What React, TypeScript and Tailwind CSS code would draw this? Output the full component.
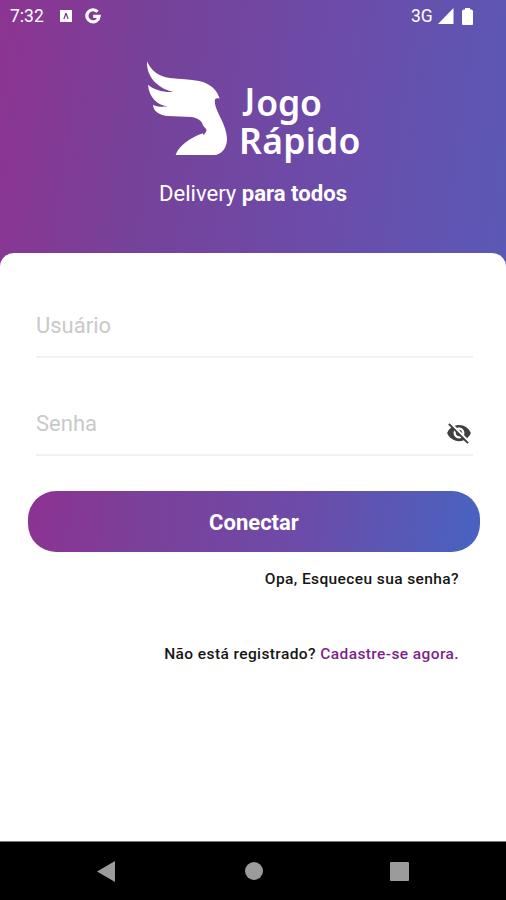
import React from "react";
import { MdVisibilityOff } from "react-icons/md";

function StatusBar() {
  return (
    <div className="flex h-8 items-center justify-between pl-[10px] pr-[33px] text-white">
      <div className="flex items-center">
        <span className="w-[50px] text-[17.5px] leading-8">7:32</span>
        <svg className="h-3 w-3" viewBox="0 0 12 12">
          <path fillRule="evenodd" fill="currentColor" d="M0 0H12V12H0ZM5.3 3L3.3 9H4.6L6 5L7.4 9H8.7L6.7 3Z" />
        </svg>
        <svg className="ml-[13px] h-4 w-4" viewBox="0 0 16 16" fill="none" stroke="currentColor" strokeWidth="3.2">
          <path d="M12.6 3.8A6.1 6.1 0 1 0 14.1 8.4H8.2" />
        </svg>
      </div>
      <div className="flex items-center">
        <span className="w-[27px] text-[17.5px] leading-8 tracking-[-0.1px]">3G</span>
        <svg className="h-4 w-4" viewBox="0 0 16 16" fill="currentColor">
          <path d="M15.5 0V16H0Z" />
        </svg>
        <svg className="ml-2 h-[17px] w-[11px]" viewBox="0 0 11 17" fill="currentColor">
          <path d="M3 0H8V1.5H9.5Q11 2 11 3V16Q11 17 10 17H1Q0 17 0 16V3Q0 2 1.5 1.5H3Z" />
        </svg>
      </div>
    </div>
  );
}

function Brand() {
  return (
    <div className="flex h-[133px] pl-[135px] pt-[18px] text-white">
      <svg className="h-[115px] w-[105px] shrink-0" viewBox="0 0 315 345" fill="currentColor">
        <path d="M36 34C48 62 70 80 105 84C135 88 165 88 192 93C225 100 245 118 254 146C248 144 243 145 240 148C238 160 242 172 250 190C262 215 276 240 276 270C274 298 258 314 238 315H122C130 290 165 262 204 250L206 256L214 244C216 235 206 232 204 226C200 212 190 205 170 201L100 198C75 196 55 185 54 164C64 170 80 172 98 169C70 166 42 145 39 104C55 118 85 128 115 126C75 118 33 85 36 34Z" />
      </svg>
      <div className="pt-[33px] font-['Noto_Sans',sans-serif] text-[35.5px] font-semibold leading-[38px]">
        <div className="h-[38px]">
          <span className="relative -top-[6px] ml-[5px] mr-[1.5px] text-[29.5px] font-bold leading-none">J</span>
          <span className="tracking-[-0.2px]">ogo</span>
        </div>
        <div className="-ml-[1px] h-[38px] tracking-[0.3px]">Rápido</div>
      </div>
    </div>
  );
}

function Field({ label, icon }: { label: string; icon?: React.ReactNode }) {
  return (
    <div className="flex h-[63px] items-start justify-between border-b-2 border-[#f1f1f1]">
      <span className="-mt-px text-[22px] leading-[63px] text-[#c9c9c9]">{label}</span>
      {icon}
    </div>
  );
}

export default function App() {
  return (
    <div className="flex h-[900px] w-[506px] flex-col overflow-hidden bg-white font-[Roboto,sans-serif]">
      <header className="h-[271px] shrink-0 bg-[linear-gradient(98deg,#8d3492_0%,#764299_30%,#6d4ba9_62%,#5a59b5_100%)]">
        <StatusBar />
        <Brand />
        <p className="pt-[14px] text-center text-[22.1px] leading-[28px] text-white">
          Delivery <b className="font-bold">para todos</b>
        </p>
      </header>
      <main className="-mt-[18px] flex flex-1 flex-col rounded-t-[14px] bg-white">
        <div className="pl-[36px] pr-[33px] pt-[42px]">
          <Field label="Usuário" />
          <div className="h-[35px]" />
          <Field label="Senha" icon={<MdVisibilityOff className="mr-[1px] mt-[27px] h-[26px] w-[26px] text-[#404040]" />} />
        </div>
        <button className="ml-[28px] mt-[35px] h-[61px] w-[452px] rounded-[28px] bg-[linear-gradient(98deg,#8c3292_0%,#7b4099_25%,#6d4ba8_60%,#4863c1_100%)] pt-[2px] text-[22px] font-bold text-white">
          Conectar
        </button>
        <p className="mr-[47px] mt-[17px] text-right text-[15.5px] font-medium leading-[20px] tracking-[0.4px] text-[#151515]">Opa, Esqueceu sua senha?</p>
        <p className="mr-[47px] mt-[55px] text-right text-[15.5px] font-medium leading-[20px] tracking-[0.4px] text-[#151515]">
          Não está registrado? <span className="text-[#7f1f88]">Cadastre-se agora.</span>
        </p>
      </main>
      <nav className="flex h-[59px] shrink-0 items-center border-t border-[#777] bg-black text-[#9b9b9b]">
        <svg className="ml-[97px] h-[21px] w-[18px]" viewBox="0 0 18 21" fill="currentColor">
          <path d="M18 0V21L0 10.5Z" />
        </svg>
        <div className="ml-[130px] h-[18px] w-[18px] rounded-full bg-current" />
        <div className="ml-[127px] h-[19px] w-[19px] rounded-[1px] bg-current" />
      </nav>
    </div>
  );
}
